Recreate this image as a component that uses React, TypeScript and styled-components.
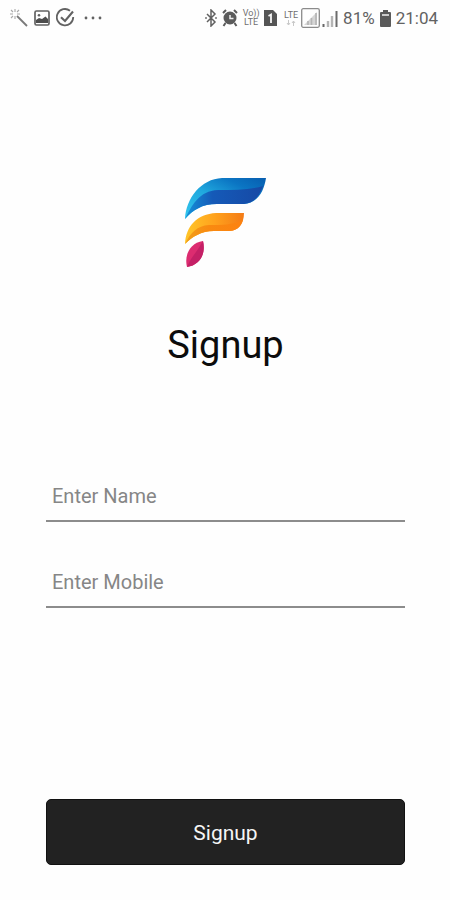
import React, { useState } from "react";
import styled, { createGlobalStyle } from "styled-components";

const GlobalStyle = createGlobalStyle`
  *, *::before, *::after { box-sizing: border-box; }
  body { margin: 0; background: #fefefe; font-family: Roboto, "Liberation Sans", sans-serif; }
`;

const Screen = styled.div`
  min-height: 100vh;
  display: flex;
  flex-direction: column;
  background: #fefefe;
`;

const StatusBar = styled.header`
  display: flex;
  justify-content: space-between;
  height: 36px;
  padding: 0 12px 0 10px;
  color: #626262;
`;

const StatusGroup = styled.div<{ $gap: number }>`
  display: flex;
  align-items: center;
  gap: ${({ $gap }) => $gap}px;

  svg { display: block; flex: none; }
`;

const StatusText = styled.span`
  font-size: 17px;
  line-height: 20px;
`;

const NetworkLabel = styled.span`
  display: flex;
  flex-direction: column;
  align-items: center;
  width: 16px;
  font-size: 9px;
  font-weight: 400;
  line-height: 9px;
  color: #707070;
`;

const Content = styled.main`
  flex: 1;
  display: flex;
  flex-direction: column;
  align-items: center;
  padding: 140px 45px 35px 46px;
`;

const Title = styled.h1`
  margin: 53px 0 0;
  font-size: 38px;
  font-weight: 400;
  line-height: 48px;
  color: #0c0c0c;
`;

const Form = styled.form`
  flex: 1;
  display: flex;
  flex-direction: column;
  width: 100%;
  margin-top: 103px;
`;

const Fields = styled.div`
  display: grid;
  gap: 36px;
  margin-bottom: 40px;
`;

const TextField = styled.input`
  width: 100%;
  height: 50px;
  padding: 0 6px;
  border: 0;
  border-bottom: 2px solid #8c8c8c;
  border-radius: 0;
  outline: 0;
  background: transparent;
  font: 400 20px/24px Roboto, "Liberation Sans", sans-serif;
  color: #222;

  &::placeholder { color: #868686; opacity: 1; }
  &:focus { border-color: #222; }
`;

const SubmitButton = styled.button`
  width: 100%;
  height: 66px;
  margin-top: auto;
  padding: 2px 0 0;
  border: 1px solid #111;
  border-radius: 5px;
  background: #222;
  color: #f5f5f5;
  font: 400 21px/24px Roboto, "Liberation Sans", sans-serif;
  cursor: pointer;
`;

const Wand = () => (
  <svg width="18" height="18" viewBox="0 0 18 18" fill="none" stroke="currentColor" aria-hidden="true">
    <path d="M7 7l10 10" strokeWidth="1.800" opacity=".85" />
    <path d="M5 0v3M1 1l2 2M0 5h3M1 9l2-2M9 1L7 3M5 7v3M7 5h3" strokeWidth="1.100" opacity=".55" />
  </svg>
);

const Picture = () => (
  <svg width="16" height="16" viewBox="0 0 16 16" aria-hidden="true">
    <rect x="1" y="1" width="14" height="14" rx="1.400" fill="none" stroke="currentColor" strokeWidth="1.700" />
    <circle cx="5" cy="5.200" r="1.300" fill="currentColor" />
    <path d="M2 13V10l3-2 3 1 3.500-2.500L14 9v4z" fill="#4d4d4d" />
  </svg>
);

const CheckCircle = () => (
  <svg width="20" height="20" viewBox="0 0 20 20" fill="none" stroke="currentColor" aria-hidden="true">
    <path d="M14 2.700A8.200 8.200 0 1 0 17.200 9" strokeWidth="1.800" />
    <path d="M5 9.200l4 3.800L17 3.500" strokeWidth="2.100" />
  </svg>
);

const Dots = () => (
  <svg width="18" height="4" viewBox="0 0 18 4" fill="currentColor" aria-hidden="true">
    <circle cx="2" cy="2" r="1.400" /><circle cx="9" cy="2" r="1.400" /><circle cx="16" cy="2" r="1.400" />
  </svg>
);

const Bluetooth = () => (
  <svg width="12" height="18" viewBox="0 0 12 18" aria-hidden="true">
    <path d="M2 5l8 8-4 4V1l4 4-8 8" fill="none" stroke="#606060" strokeWidth="1.500" />
    <path d="M0 9h2M10 9h2" stroke="#777" strokeWidth="1.500" />
  </svg>
);

const Alarm = () => (
  <svg width="16" height="18" viewBox="0 0 16 18" aria-hidden="true">
    <circle cx="8" cy="9" r="6.500" fill="#5b5b5b" />
    <path d="M1 4l3-3M12 1l3 3M3.500 14L1.500 17M12.500 14l2 3" stroke="#5b5b5b" strokeWidth="2" />
    <path d="M8 6v3.500h3.500" fill="none" stroke="#eee" strokeWidth="1.500" />
  </svg>
);

const Sim = () => (
  <svg width="13" height="16" viewBox="0 0 13 16" aria-hidden="true">
    <path d="M0 0h9l4 4v12H0z" fill="#555" />
    <path d="M4.500 6L7 4.500V13" fill="none" stroke="#f5f5f5" strokeWidth="1.800" />
  </svg>
);

const BoxedSignal = () => (
  <svg width="19" height="20" viewBox="0 0 19 20" aria-hidden="true">
    <rect x=".7" y=".7" width="17.600" height="18.600" rx="1.500" fill="none" stroke="#8b8b8b" strokeWidth="1.300" />
    <path d="M3 17L16 4v13z" fill="#d6d6d6" />
    <path d="M7 17v-4M10.500 17V10M15 17V5" stroke="#b5b5b5" strokeWidth="1.600" />
  </svg>
);

const Signal = () => (
  <svg width="16" height="17" viewBox="0 0 16 17" aria-hidden="true">
    <path d="M1.500 17v-3" stroke="#666" strokeWidth="2" />
    <path d="M6 17v-6M10 17V6" stroke="#b5b5b5" strokeWidth="2.400" />
    <path d="M14.500 17V1" stroke="#6b6b6b" strokeWidth="2" />
  </svg>
);

const Battery = () => (
  <svg width="11" height="17" viewBox="0 0 11 17" aria-hidden="true">
    <path d="M3 0h5v2h2q1 0 1 1v13q0 1-1 1H1q-1 0-1-1V3q0-1 1-1h2z" fill="#5a5a5a" />
    <path d="M2 4h7v2H2z" fill="#ccc" />
  </svg>
);

const BrandMark = () => (
  <svg width="84" height="92" viewBox="0 0 84 92" role="img" aria-label="F logo">
    <defs>
      <linearGradient id="blue-top" x1="0" y1="1" x2="1" y2="0">
        <stop offset="0" stopColor="#35c8ee" />
        <stop offset=".45" stopColor="#20a8de" />
        <stop offset=".75" stopColor="#0b75c3" />
        <stop offset="1" stopColor="#075daf" />
      </linearGradient>
      <linearGradient id="blue-fold" x1="0" y1="0" x2="1" y2="0">
        <stop offset="0" stopColor="#1593da" />
        <stop offset=".35" stopColor="#155ab8" />
        <stop offset="1" stopColor="#1649a5" />
      </linearGradient>
      <linearGradient id="orange-top" x1="0" y1="0" x2="1" y2="0">
        <stop offset="0" stopColor="#ffc629" />
        <stop offset=".5" stopColor="#ffa21d" />
        <stop offset="1" stopColor="#f47b16" />
      </linearGradient>
      <linearGradient id="orange-fold" x1="0" y1="0" x2="1" y2="0">
        <stop offset="0" stopColor="#f0a01b" />
        <stop offset=".4" stopColor="#f98a10" />
        <stop offset="1" stopColor="#fc8211" />
      </linearGradient>
    </defs>
    <path d="M1 43C2 22 17 3 38 2h44C80 15 74 27 60 28H33C18 28 9 34 1 43Z" fill="url(#blue-top)" />
    <path d="M1 43C8 29 15 15 34 14c17 0 32 0 45-4-4 11-9 17-19 18H33C18 28 9 34 1 43Z" fill="url(#blue-fold)" />
    <path d="M1 68C2 50 13 38 32 37h28C60 48 54 55 45 55H30C17 55 8 61 1 68Z" fill="url(#orange-top)" />
    <path d="M1 68c6-12 12-18 24-19 13 0 23 0 34-5-2 7-7 11-14 11H30C17 55 8 61 1 68Z" fill="url(#orange-fold)" />
    <path d="M19 65C22 78 16 89 3 91 0 79 6 67 19 65Z" fill="#dc2c70" />
    <path d="M19 65C22 78 16 89 3 91 7 81 13 76 19 65Z" fill="#c42066" />
  </svg>
);

export default function App() {
  const [name, setName] = useState("");
  const [mobile, setMobile] = useState("");

  return (
    <Screen>
      <GlobalStyle />
      <StatusBar>
        <StatusGroup $gap={8}>
          <StatusGroup $gap={6}>
            <Wand />
            <Picture />
            <CheckCircle />
          </StatusGroup>
          <Dots />
        </StatusGroup>
        <StatusGroup $gap={5}>
          <StatusGroup $gap={5}>
            <Bluetooth />
            <Alarm />
            <NetworkLabel><span>Vo))</span><span>LTE</span></NetworkLabel>
          </StatusGroup>
          <StatusGroup $gap={6}>
            <Sim />
            <StatusGroup $gap={2}>
              <NetworkLabel>
                <span>LTE</span>
                <svg width="10" height="6" viewBox="0 0 10 6" aria-hidden="true">
                  <path d="M2.500 0v5M1 3l1.500 2L4 3M7.500 6V1M6 3l1.500-2L9 3" fill="none" stroke="#c8c8c8" />
                </svg>
              </NetworkLabel>
              <BoxedSignal />
              <Signal />
            </StatusGroup>
          </StatusGroup>
          <StatusText>81%</StatusText>
          <Battery />
          <StatusText>21:04</StatusText>
        </StatusGroup>
      </StatusBar>
      <Content>
        <BrandMark />
        <Title>Signup</Title>
        <Form onSubmit={(event) => event.preventDefault()}>
          <Fields>
            <TextField
              aria-label="Enter Name"
              placeholder="Enter Name"
              autoComplete="name"
              value={name}
              onChange={(event) => setName(event.target.value)}
            />
            <TextField
              type="tel"
              aria-label="Enter Mobile"
              placeholder="Enter Mobile"
              autoComplete="tel"
              value={mobile}
              onChange={(event) => setMobile(event.target.value)}
            />
          </Fields>
          <SubmitButton type="submit">Signup</SubmitButton>
        </Form>
      </Content>
    </Screen>
  );
}
